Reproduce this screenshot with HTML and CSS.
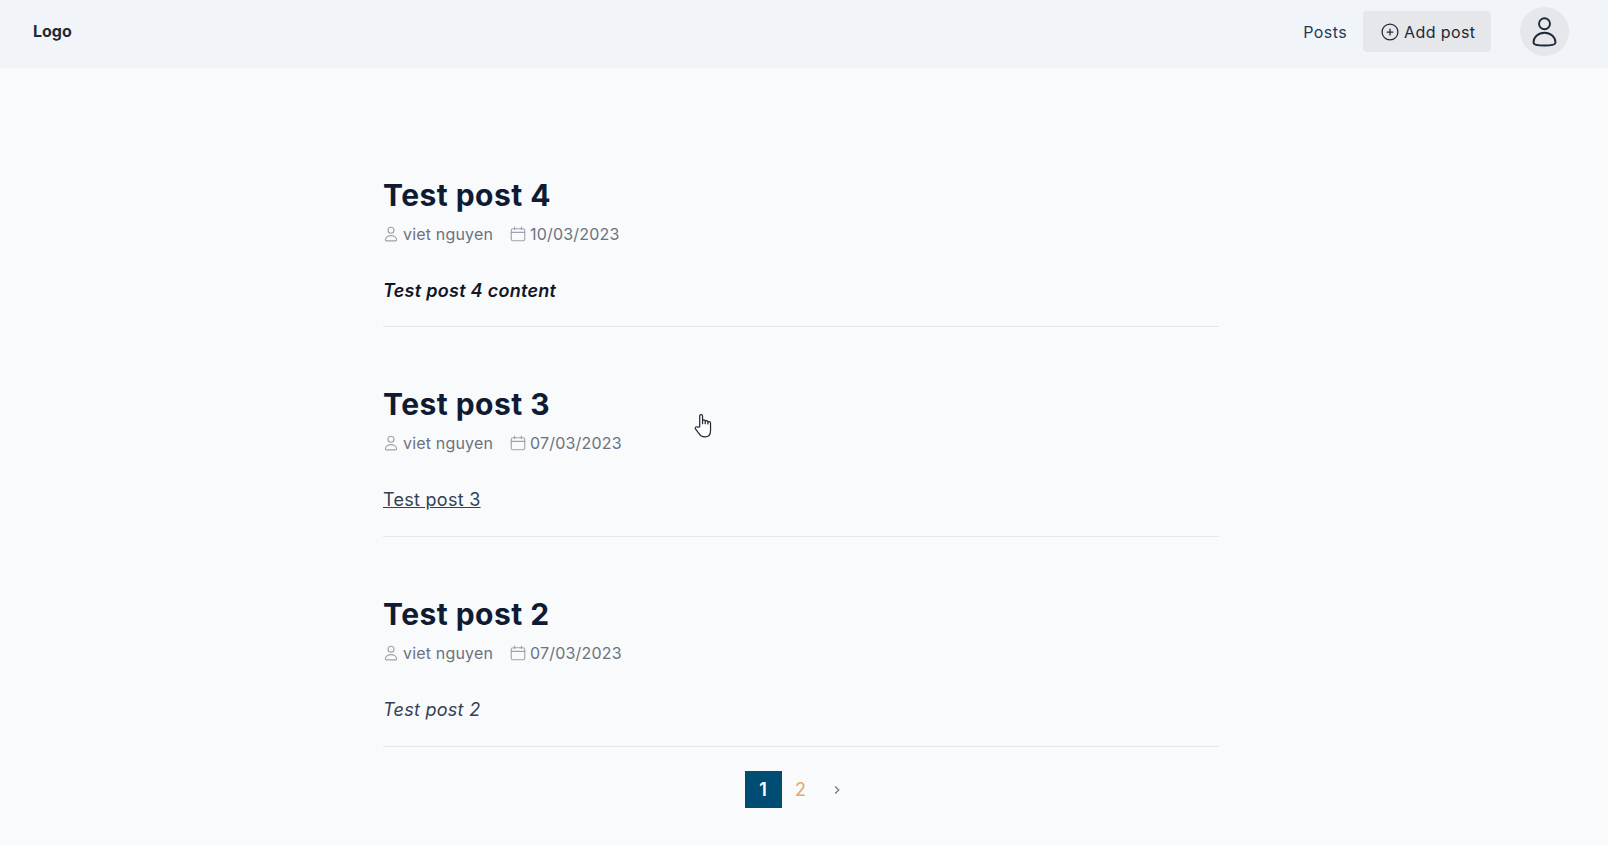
FILE: index.html
```html
<!DOCTYPE html>
<html lang="en">
<head>
<meta charset="utf-8">
<title>Posts</title>
<link rel="stylesheet" href="styles.css">
</head>
<body>
<header class="topbar">
  <a class="logo">Logo</a>
  <nav class="nav">
    <a class="nav-link">Posts</a>
    <a class="add-btn">
      <svg class="add-icon" viewBox="0 0 24 24" fill="none" stroke="currentColor" stroke-width="1.5" stroke-linecap="round"><circle cx="12" cy="12" r="9.500"/><path d="M12 8.500v7M8.500 12h7"/></svg>
      Add post
    </a>
    <span class="avatar">
      <svg class="avatar-icon" viewBox="0 0 32 32" fill="none" stroke="currentColor" stroke-width="1.900" stroke-linecap="round" stroke-linejoin="round"><circle cx="15.500" cy="7.800" r="5.500"/><path d="M4.500 26.500c0-5.500 5-9.800 11-9.800s11 4.300 11 9.800c0 2-3 3-11 3s-11-1-11-3z"/></svg>
    </span>
  </nav>
</header>
<main class="posts">
  <article class="post">
    <h2 class="post-title">Test post 4</h2>
    <div class="meta">
      <span class="meta-item"><svg class="meta-icon" viewBox="0 0 24 24" fill="none" stroke="currentColor" stroke-width="1.500" stroke-linecap="round" stroke-linejoin="round"><circle cx="12" cy="7" r="4"/><path d="M4.500 20c0-3.300 3.300-5.800 7.500-5.800s7.500 2.500 7.500 5.800c0 .8-.6 1.200-1.300 1.200H5.800c-.7 0-1.300-.4-1.300-1.200z"/></svg>viet nguyen</span>
      <span class="meta-item"><svg class="meta-icon" viewBox="0 0 24 24" fill="none" stroke="currentColor" stroke-width="1.500" stroke-linecap="round" stroke-linejoin="round"><rect x="3" y="5" width="18" height="16" rx="2.500"/><path d="M3 9.800h18M7.500 2.800V6M16.500 2.800V6"/></svg>10/03/2023</span>
    </div>
    <p class="content content-strong">Test post 4 content</p>
  </article>
  <article class="post">
    <h2 class="post-title">Test post 3</h2>
    <div class="meta">
      <span class="meta-item"><svg class="meta-icon" viewBox="0 0 24 24" fill="none" stroke="currentColor" stroke-width="1.500" stroke-linecap="round" stroke-linejoin="round"><circle cx="12" cy="7" r="4"/><path d="M4.500 20c0-3.300 3.300-5.800 7.500-5.800s7.500 2.500 7.500 5.800c0 .8-.6 1.200-1.300 1.200H5.800c-.7 0-1.300-.4-1.300-1.200z"/></svg>viet nguyen</span>
      <span class="meta-item"><svg class="meta-icon" viewBox="0 0 24 24" fill="none" stroke="currentColor" stroke-width="1.500" stroke-linecap="round" stroke-linejoin="round"><rect x="3" y="5" width="18" height="16" rx="2.500"/><path d="M3 9.800h18M7.500 2.800V6M16.500 2.800V6"/></svg>07/03/2023</span>
    </div>
    <p class="content content-underline">Test post 3</p>
  </article>
  <article class="post">
    <h2 class="post-title">Test post 2</h2>
    <div class="meta">
      <span class="meta-item"><svg class="meta-icon" viewBox="0 0 24 24" fill="none" stroke="currentColor" stroke-width="1.500" stroke-linecap="round" stroke-linejoin="round"><circle cx="12" cy="7" r="4"/><path d="M4.500 20c0-3.300 3.300-5.800 7.500-5.800s7.500 2.500 7.500 5.800c0 .8-.6 1.200-1.300 1.200H5.800c-.7 0-1.300-.4-1.300-1.200z"/></svg>viet nguyen</span>
      <span class="meta-item"><svg class="meta-icon" viewBox="0 0 24 24" fill="none" stroke="currentColor" stroke-width="1.500" stroke-linecap="round" stroke-linejoin="round"><rect x="3" y="5" width="18" height="16" rx="2.500"/><path d="M3 9.800h18M7.500 2.800V6M16.500 2.800V6"/></svg>07/03/2023</span>
    </div>
    <p class="content content-italic">Test post 2</p>
  </article>
  <div class="pagination">
    <span class="page page-current">1</span>
    <span class="page page-other">2</span>
    <span class="page page-next"><svg class="next-icon" viewBox="0 0 10 10" fill="none" stroke="currentColor" stroke-width="1.200"><path d="M3.200 1.500 6.800 5 3.200 8.500"/></svg></span>
  </div>
</main>
<svg class="cursor" viewBox="0 0 20 26" fill="#fff" stroke="#1f2937" stroke-width="1.300" stroke-linejoin="round"><path d="M6 14V2.500a1.500 1.500 0 0 1 3 0V10.500V8a1.400 1.400 0 0 1 2.800 0v2.500V8.800a1.400 1.400 0 0 1 2.800 0v2V9.800a1.400 1.400 0 0 1 2.800 0V18c0 3.500-2 6.500-6 6.500-3 0-4.800-1.200-6.500-4L1.500 16c-.8-1.400.8-2.800 2-1.800z"/></svg>
</body>
</html>
```

FILE: styles.css
```css
* {
  box-sizing: border-box;
}

html, body {
  margin: 0;
  height: 845px;
  overflow: hidden;
}

body {
  background: #f9fafb;
  color: #111827;
  font-family: Inter, "Liberation Sans", sans-serif;
  position: relative;
}

.topbar {
  height: 68px;
  background: #f1f5f9;
  display: flex;
  align-items: center;
  justify-content: space-between;
  padding: 0 39px 5px 33px;
}

.logo {
  font-size: 16px;
  font-weight: 700;
  color: #1f2937;
  margin-bottom: 2px;
}

.nav {
  display: flex;
  align-items: center;
}

.nav-link {
  font-size: 16px;
  letter-spacing: 0.4px;
  color: #1f3b57;
  margin-right: 16px;
}

.add-btn {
  display: flex;
  align-items: center;
  gap: 4.5px;
  height: 41px;
  width: 128px;
  padding-left: 16.5px;
  background: #e5e7eb;
  border-radius: 4px;
  font-size: 16px;
  font-weight: 400;
  letter-spacing: 0.4px;
  color: #1f2937;
}

.add-icon {
  width: 20px;
  height: 20px;
  color: #1f2937;
}

.avatar {
  display: flex;
  align-items: center;
  justify-content: center;
  width: 49px;
  height: 49px;
  margin-left: 29px;
  border-radius: 50%;
  background: #e5e7eb;
}

.avatar-icon {
  width: 32px;
  height: 32px;
  color: #1e293b;
}

.posts {
  width: 836px;
  margin: 0 0 0 383px;
  padding-top: 108.5px;
}

.post {
  padding-bottom: 21.35px;
  margin-bottom: 59.15px;
  border-bottom: 1px solid #e5e7eb;
}

.post:last-of-type {
  margin-bottom: 24.4px;
}

.post-title {
  margin: 0;
  font-size: 30px;
  line-height: 36px;
  font-weight: 700;
  letter-spacing: 0.45px;
  color: #0f1b33;
}

.meta {
  display: flex;
  gap: 17px;
  margin-top: 9px;
  font-size: 16px;
  line-height: 24px;
  letter-spacing: 0.18px;
  color: #6b7280;
}

.meta-item {
  display: flex;
  align-items: center;
  gap: 3.5px;
}

.meta-icon {
  width: 18px;
  height: 18px;
  margin-left: -1.5px;
  color: #9ca3af;
}

.content {
  margin: 30px 0 0;
  font-size: 18px;
  line-height: 29.25px;
  letter-spacing: 0.28px;
  color: #334155;
}

.content-strong {
  font-style: italic;
  font-weight: 600;
  color: #0f172a;
}

.content-underline {
  text-decoration: underline;
}

.content-italic {
  font-style: italic;
}

.pagination {
  display: flex;
  justify-content: center;
  padding-right: 2px;
}

.page {
  width: 37px;
  height: 37px;
  padding-top: 1px;
  display: flex;
  align-items: center;
  justify-content: center;
  font-size: 18px;
}

.page-current {
  background: #004d73;
  color: #fff;
  font-weight: 600;
}

.page-other {
  color: #e2a868;
  padding-left: 1px;
}

.page-next {
  color: #6b7280;
}

.next-icon {
  width: 10px;
  height: 10px;
}

.cursor {
  position: absolute;
  left: 694px;
  top: 413px;
  width: 19px;
  height: 26px;
}
```
